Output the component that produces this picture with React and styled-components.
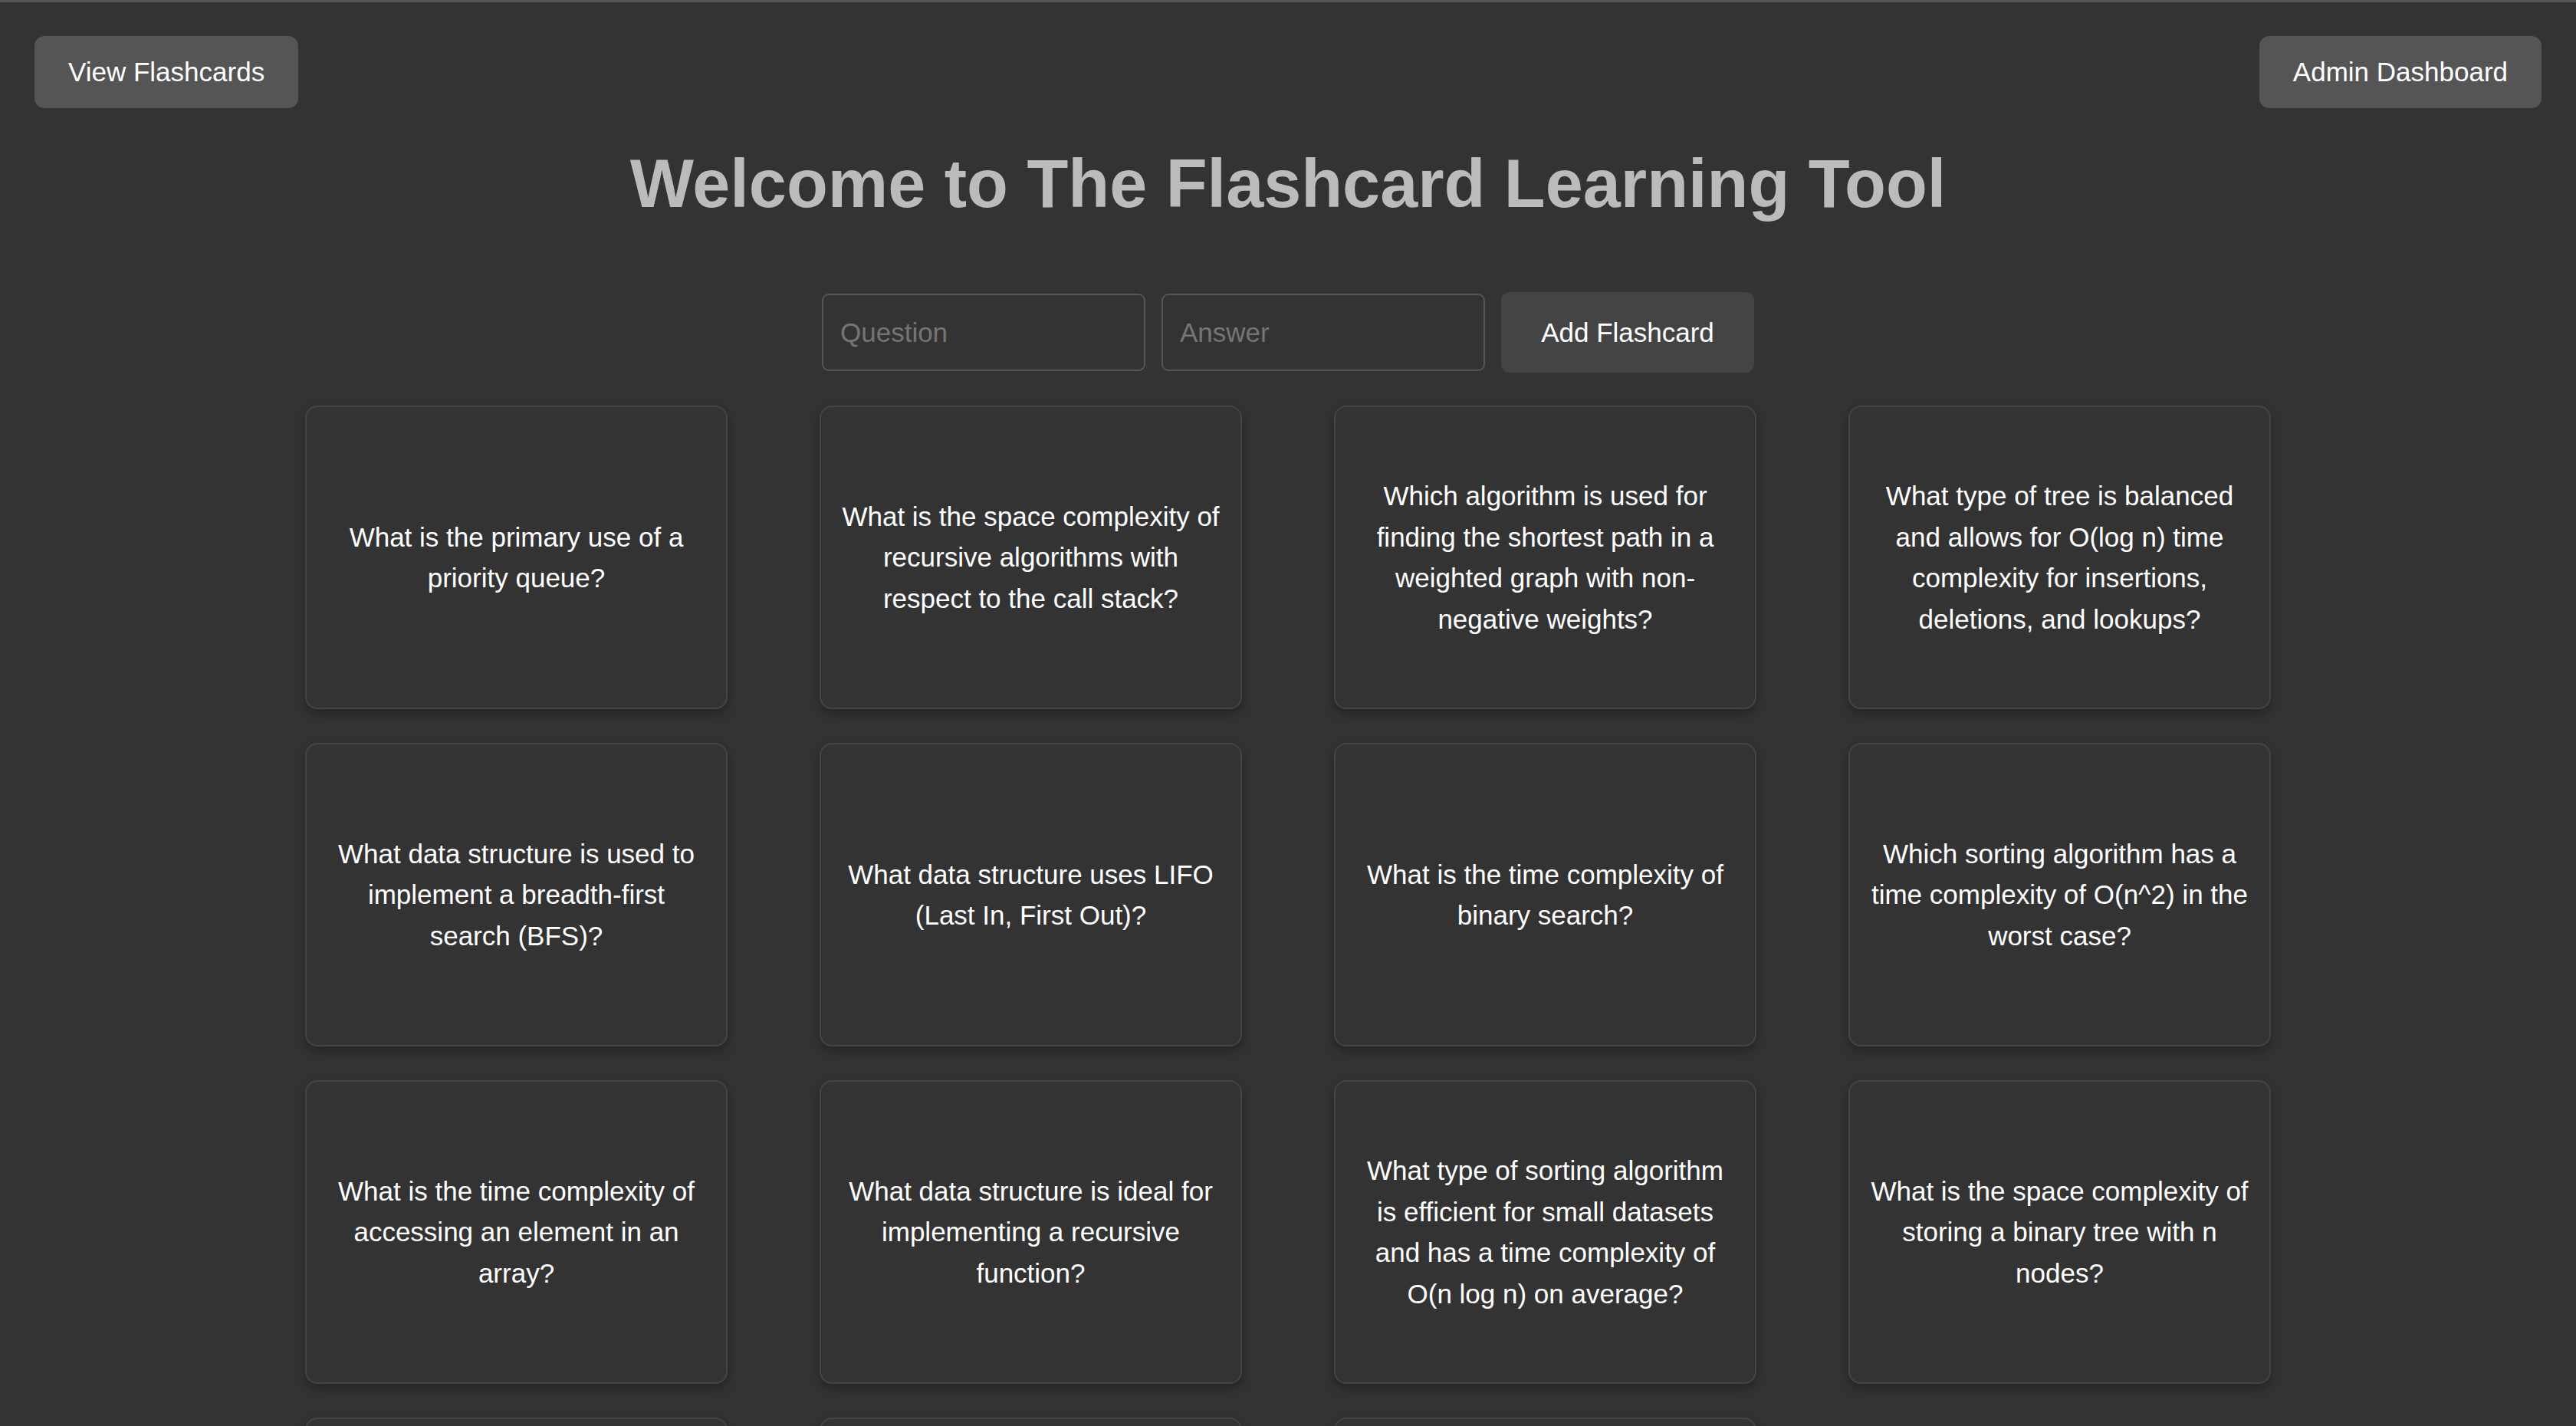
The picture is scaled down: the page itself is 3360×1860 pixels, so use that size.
import React from 'react';
import styled, { createGlobalStyle } from 'styled-components';

const GlobalStyle = createGlobalStyle`
    html,
    body {
        margin: 0;
        padding: 0;
        background: #333333;
    }

    body {
        font-family: 'Liberation Sans', Arial, Helvetica, sans-serif;
        color: #ffffff;
        border-top: 3px solid #555555;
        min-height: 1857px;
    }

    * {
        box-sizing: border-box;
    }
`;

const Page = styled.div`
    display: flex;
    flex-direction: column;
    align-items: center;
    width: 100%;
`;

const TopBar = styled.div`
    display: flex;
    justify-content: space-between;
    align-items: center;
    width: 100%;
    padding: 44px 45px 0;
`;

const NavButton = styled.button`
    height: 94px;
    padding: 0 44px;
    border: none;
    border-radius: 13px;
    background: #555555;
    color: #ffffff;
    font-family: inherit;
    font-size: 35px;
    cursor: pointer;
`;

const Title = styled.h1`
    margin: 48px 0 0;
    font-size: 88.2px;
    font-weight: 700;
    color: #bbbbbb;
    text-align: center;
`;

const Form = styled.form`
    display: flex;
    align-items: center;
    gap: 21px;
    margin-top: 90px;
`;

const Field = styled.input`
    width: 422px;
    height: 101px;
    padding: 0 22px;
    border: 2px solid #555555;
    border-radius: 9px;
    background: #333333;
    color: #ffffff;
    font-family: inherit;
    font-size: 35px;
    outline: none;

    ::placeholder {
        color: #777777;
    }
`;

const AddButton = styled.button`
    width: 330px;
    height: 105px;
    border: none;
    border-radius: 11px;
    background: #444444;
    color: #ffffff;
    font-family: inherit;
    font-size: 35px;
    cursor: pointer;
`;

const CardGrid = styled.div`
    display: grid;
    grid-template-columns: repeat(4, 551px);
    grid-auto-rows: 396px;
    column-gap: 120px;
    row-gap: 44px;
    margin-top: 43px;
`;

const Card = styled.div`
    display: flex;
    align-items: center;
    justify-content: center;
    padding: 0 25px;
    border: 2px solid #444444;
    border-radius: 16px;
    background: #333333;
    box-shadow: 0 6px 14px rgba(0, 0, 0, 0.3);
    cursor: pointer;
`;

const CardText = styled.p`
    margin: 0;
    font-size: 35px;
    line-height: 53.5px;
    text-align: center;
    color: #ffffff;
`;

const flashcards = [
    'What is the primary use of a priority queue?',
    'What is the space complexity of recursive algorithms with respect to the call stack?',
    'Which algorithm is used for finding the shortest path in a weighted graph with non-negative weights?',
    'What type of tree is balanced and allows for O(log n) time complexity for insertions, deletions, and lookups?',
    'What data structure is used to implement a breadth-first search (BFS)?',
    'What data structure uses LIFO (Last In, First Out)?',
    'What is the time complexity of binary search?',
    'Which sorting algorithm has a time complexity of O(n^2) in the worst case?',
    'What is the time complexity of accessing an element in an array?',
    'What data structure is ideal for implementing a recursive function?',
    'What type of sorting algorithm is efficient for small datasets and has a time complexity of O(n log n) on average?',
    'What is the space complexity of storing a binary tree with n nodes?',
    'What is a hash collision?',
    'What data structure uses FIFO (First In, First Out)?',
    'What is the worst-case time complexity of quicksort?',
];

function App() {
    return (
        <>
            <GlobalStyle />
            <Page>
                <TopBar>
                    <NavButton>View Flashcards</NavButton>
                    <NavButton>Admin Dashboard</NavButton>
                </TopBar>
                <Title>Welcome to The Flashcard Learning Tool</Title>
                <Form onSubmit={(e) => e.preventDefault()}>
                    <Field type='text' placeholder='Question' />
                    <Field type='text' placeholder='Answer' />
                    <AddButton type='submit'>Add Flashcard</AddButton>
                </Form>
                <CardGrid>
                    {flashcards.map((question) => (
                        <Card key={question}>
                            <CardText>{question}</CardText>
                        </Card>
                    ))}
                </CardGrid>
            </Page>
        </>
    );
}

export default App;
